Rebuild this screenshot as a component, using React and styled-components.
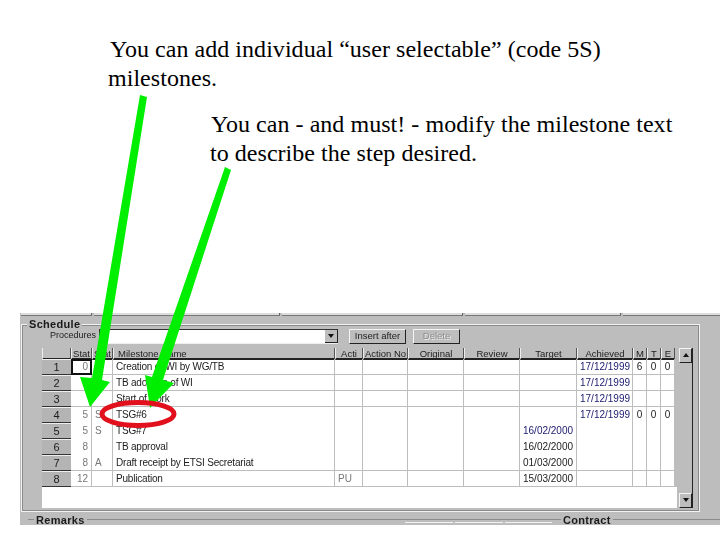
import React from 'react'
import styled, { createGlobalStyle } from 'styled-components'

const GlobalStyle = createGlobalStyle`
  html, body { margin: 0; padding: 0; background: #fff; }
  #root { width: 720px; height: 540px; overflow: hidden; }
`

const Slide = styled.div`
  position: relative;
  width: 720px;
  height: 540px;
  overflow: hidden;
  background: #fff;
  padding-top: 35px;
  box-sizing: border-box;
`

const Note = styled.p`
  margin: ${p => p.$top}px 0 0 ${p => p.$left}px;
  width: ${p => p.$width}px;
  font: 24px/29px "Liberation Serif", "Times New Roman", serif;
  letter-spacing: 0.04px;
  color: #000;
  text-indent: ${p => p.$indent}px;
`

const Panel = styled.div`
  margin: 145px 0 0 20px;
  width: 700px;
  height: 212px;
  background: #bdbdbd;
  overflow: hidden;
  font: 10px/14px "Liberation Sans", Arial, sans-serif;
  color: #1c1c1c;
  display: flex;
  flex-direction: column;
  filter: blur(0.3px);
`

const TabEdge = styled.div`
  height: 3px;
  margin: 0 0 8px 1px;
  display: flex;
  gap: 2px;
`

const TabPiece = styled.span`
  flex: 0 0 ${p => p.$w}px;
  border-bottom: 1px solid #777;
  border-right: 1px solid #666;
  background: #ddd;
`

const Group = styled.div`
  position: relative;
  width: 679px;
  height: 189px;
  margin-left: 1px;
  box-sizing: border-box;
  border: 1px solid #f2f2f2;
  outline: 1px solid #8a8a8a;
  outline-offset: -2px;
  padding: 4px 0 0 20px;
`

const Legend = styled.span`
  position: absolute;
  top: -6px;
  left: 5px;
  padding: 0 2px;
  background: #bdbdbd;
  font-size: 11px;
  line-height: 11px;
  font-weight: bold;
  letter-spacing: 0.3px;
  color: #1a1a1a;
`

const Toolbar = styled.div`
  display: flex;
  align-items: flex-start;
  height: 19px;
`

const FieldLabel = styled.span`
  width: 49px;
  margin-left: 8px;
  flex: none;
  font-size: 9px;
  line-height: 12px;
`

const Select = styled.div`
  width: 239px;
  height: 15px;
  box-sizing: border-box;
  background: #fff;
  border-top: 1px solid #333;
  border-left: 1px solid #333;
  border-bottom: 1px solid #eee;
  display: flex;
  justify-content: flex-end;
`

const DropButton = styled.div`
  width: 13px;
  height: 13px;
  background: #bdbdbd;
  border-right: 1px solid #222;
  border-bottom: 1px solid #222;
  box-sizing: border-box;
  display: flex;
  align-items: center;
  justify-content: center;
`

const Arrowhead = styled.span`
  width: 0;
  height: 0;
  border-left: 3px solid transparent;
  border-right: 3px solid transparent;
  ${p => p.$up ? 'border-bottom: 4px solid #111;' : 'border-top: 4px solid #111;'}
`

const Button = styled.button`
  width: ${p => p.$w}px;
  height: 15px;
  margin-left: ${p => p.$gap}px;
  padding: 0;
  background: #bdbdbd;
  border: 1px solid;
  border-color: #f4f4f4 #222 #222 #f4f4f4;
  font: 9.5px/12px "Liberation Sans", Arial, sans-serif;
  color: ${p => p.disabled ? '#8d8d8d' : '#222'};
  text-shadow: ${p => p.disabled ? '1px 1px 0 #eee' : 'none'};
`

const TableRow = styled.div`
  display: flex;
  height: 160px;
`

const Table = styled.div`
  width: 635px;
  height: 160px;
  background: #fff;
  display: grid;
  grid-template-columns: 29px 21px 21px 222px 28px 45px 56px 56px 57px 56px 14px 14px 14px 2px;
  grid-template-rows: 11px repeat(8, 16px);
  align-content: start;
`

const Head = styled.div`
  background: #bdbdbd;
  border-left: 1px solid #eee;
  border-right: 1px solid #555;
  border-bottom: 2px solid #222;
  box-sizing: border-box;
  height: 12px;
  padding-left: ${p => p.$left ? '4px' : '0'};
  line-height: 11px;
  font-size: 9.5px;
  text-align: ${p => p.$left ? 'left' : 'center'};
  white-space: nowrap;
  overflow: hidden;
`

const RowHead = styled.div`
  background: #b4b4b4;
  border-top: 1px solid #eee;
  border-bottom: 1px solid #333;
  box-sizing: border-box;
  text-align: center;
  line-height: 14px;
  font-size: 11px;
`

const Cell = styled.div`
  box-sizing: border-box;
  border-right: 1px solid #bdbdbd;
  border-bottom: ${p => p.$line ? '1px solid #bdbdbd' : '0'};
  padding: 0 3px;
  line-height: 16px;
  font-size: 10px;
  letter-spacing: ${p => p.$tight ? '-0.2px' : '0'};
  white-space: nowrap;
  overflow: hidden;
  text-align: ${p => p.$align || 'left'};
  color: ${p => p.$color || '#1c1c1c'};
  ${p => p.$active && 'outline: 2px solid #111; outline-offset: -2px;'}
`

const Filler = styled.div`
  background: #bdbdbd;
`

const Scrollbar = styled.div`
  width: 14px;
  height: 160px;
  margin-left: 2px;
  background: #bdbdbd;
  border-right: 1px solid #222;
  box-sizing: border-box;
  display: flex;
  flex-direction: column;
  justify-content: space-between;
`

const ScrollButton = styled.div`
  height: 13px;
  background: #bdbdbd;
  border: 1px solid;
  border-color: #f4f4f4 #222 #222 #f4f4f4;
  display: flex;
  align-items: center;
  justify-content: center;
`

const Footer = styled.div`
  position: relative;
  flex: none;
  height: 12px;
  margin-top: 1px;
`

const FooterRule = styled.div`
  position: absolute;
  top: ${p => p.$top ?? 6}px;
  left: ${p => p.$left}px;
  width: ${p => p.$w}px;
  border-top: 1px solid ${p => p.$color || '#8a8a8a'};
`

const FooterTitle = styled.span`
  position: absolute;
  top: 0;
  left: ${p => p.$left}px;
  padding: 0 2px;
  background: #bdbdbd;
  font-size: 11px;
  font-weight: bold;
  letter-spacing: 0.3px;
`

const Overlay = styled.svg`
  position: absolute;
  left: 0;
  top: 0;
`

const heads = ['', 'Stat', 'Stat', 'Milestone Name', 'Acti', 'Action No', 'Original', 'Review', 'Target', 'Achieved', 'M', 'T', 'E']

const rows = [
  { stat: '0', code: '', name: 'Creation of WI by WG/TB', achieved: '17/12/1999', m: '6', t: '0', e: '0', line: true, active: true },
  { stat: '', code: '', name: 'TB adoption of WI', achieved: '17/12/1999', line: true },
  { stat: '', code: '', name: 'Start of work', achieved: '17/12/1999', line: true },
  { stat: '5', code: 'S', name: 'TSG#6', achieved: '17/12/1999', m: '0', t: '0', e: '0' },
  { stat: '5', code: 'S', name: 'TSG#7', target: '16/02/2000', navy: true },
  { stat: '8', code: '', name: 'TB approval', target: '16/02/2000' },
  { stat: '8', code: 'A', name: 'Draft receipt by ETSI Secretariat', target: '01/03/2000', line: true },
  { stat: '12', code: '', name: 'Publication', acti: 'PU', target: '15/03/2000', line: true },
]

const GREY = '#777'
const NAVY = '#1a1a6e'

function Row({ row, index }) {
  const { line } = row
  return (
    <>
      <RowHead>{index + 1}</RowHead>
      <Cell $align="right" $line={line} $color={GREY} $active={row.active}>{row.stat}</Cell>
      <Cell $line={line} $color={GREY}>{row.code}</Cell>
      <Cell $line={line} $tight>{row.name}</Cell>
      <Cell $line={line} $color={GREY}>{row.acti}</Cell>
      <Cell $line={line} />
      <Cell $line={line} />
      <Cell $line={line} />
      <Cell $line={line} $color={row.navy ? NAVY : undefined}>{row.target}</Cell>
      <Cell $line={line} $color={NAVY}>{row.achieved}</Cell>
      <Cell $line={line} $align="center">{row.m}</Cell>
      <Cell $line={line} $align="center">{row.t}</Cell>
      <Cell $line={line} $align="center">{row.e}</Cell>
      <Filler />
    </>
  )
}

export default function App() {
  return (
    <Slide>
      <GlobalStyle />
      <Note $left={108} $width={600} $indent={2} $top={0}>
        You can add individual “user selectable” (code 5S) milestones.
      </Note>
      <Note $left={210} $width={470} $indent={1} $top={17}>
        You can - and must! - modify the milestone text to describe the step desired.
      </Note>
      <Panel>
        <TabEdge>
          <TabPiece $w={70} />
          <TabPiece $w={185} />
          <TabPiece $w={180} />
          <TabPiece $w={155} />
          <TabPiece $w={100} />
        </TabEdge>
        <Group>
          <Legend>Schedule</Legend>
          <Toolbar>
            <FieldLabel>Procedures</FieldLabel>
            <Select>
              <DropButton><Arrowhead /></DropButton>
            </Select>
            <Button $w={57} $gap={11}>Insert after</Button>
            <Button $w={47} $gap={7} disabled>Delete</Button>
          </Toolbar>
          <TableRow>
            <Table>
              {heads.map((h, i) => <Head key={i} $left={i === 3}>{h}</Head>)}
              <Filler />
              {rows.map((row, i) => <Row key={i} row={row} index={i} />)}
            </Table>
            <Scrollbar>
              <ScrollButton><Arrowhead $up /></ScrollButton>
              <ScrollButton><Arrowhead /></ScrollButton>
            </Scrollbar>
          </TableRow>
        </Group>
        <Footer>
          <FooterRule $left={8} $w={530} />
          <FooterRule $left={537} $w={163} />
          <FooterRule $left={385} $w={48} $top={9} $color="#f2f2f2" />
          <FooterRule $left={435} $w={48} $top={9} $color="#f2f2f2" />
          <FooterRule $left={485} $w={47} $top={9} $color="#f2f2f2" />
          <FooterTitle $left={14}>Remarks</FooterTitle>
          <FooterTitle $left={541}>Contract</FooterTitle>
        </Footer>
      </Panel>
      <Overlay width="720" height="540" viewBox="0 0 720 540">
        <polygon fill="#00ee00" points="140,95 147,97 102,380 110,382 90,407 80,377 92,378" />
        <polygon fill="#00ee00" points="225,167 231,170 163,380 174,383 150,408 145,375 152,377" />
        <ellipse cx="138" cy="414" rx="36" ry="11.5" fill="none" stroke="#e2101c" strokeWidth="5" />
      </Overlay>
    </Slide>
  )
}
